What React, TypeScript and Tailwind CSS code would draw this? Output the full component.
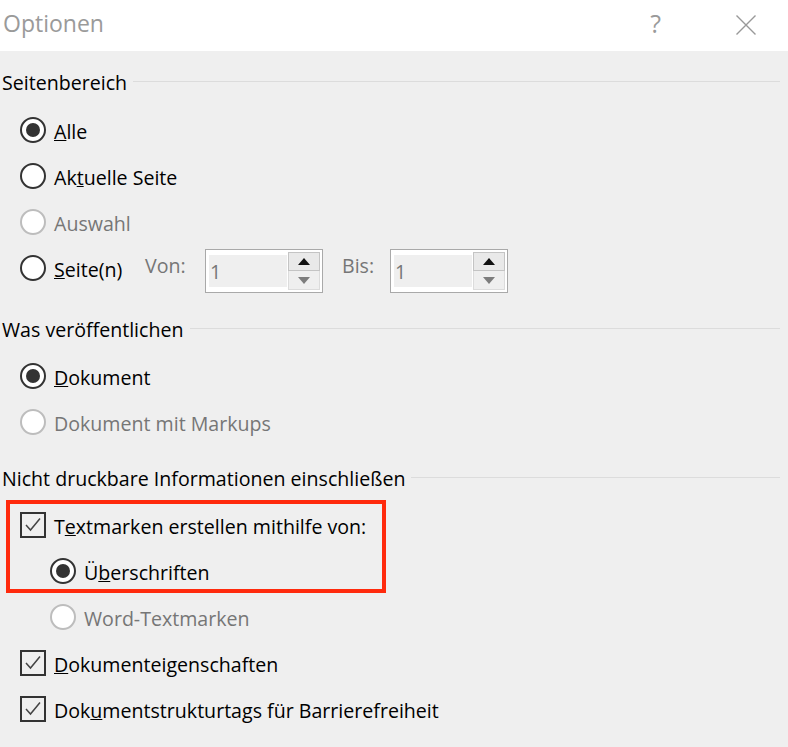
import { ReactNode } from "react";

function Heading({ children, className }: { children: ReactNode; className: string }) {
  return (
    <div className={`flex h-[30px] items-center pl-[2px] pr-[8px] ${className}`}>
      <span className="mt-[2px] text-black">{children}</span>
      <div className="ml-[6px] mt-[-1px] h-[1px] flex-1 bg-[#dcdcdc]" />
    </div>
  );
}

function Radio({ checked, disabled }: { checked?: boolean; disabled?: boolean }) {
  return (
    <span
      className={`mb-[4px] flex h-[26px] w-[26px] shrink-0 items-center justify-center rounded-full border-[2px] bg-white ${
        disabled ? "border-[#bdbdbd]" : "border-[#333333]"
      }`}
    >
      {checked && <span className="h-[14px] w-[14px] rounded-full bg-[#333333]" />}
    </span>
  );
}

function Check() {
  return (
    <span className="mb-[4px] flex h-[26px] w-[26px] shrink-0 items-center justify-center border-[2px] border-[#333333] bg-[#efefef]">
      <svg width="20" height="20" viewBox="0 0 20 20" fill="none">
        <path d="M3 10 L7.5 15 L17 3.5" stroke="#444444" strokeWidth="1.5" />
      </svg>
    </span>
  );
}

function Row({ box, children, disabled, indent }: { box: ReactNode; children: ReactNode; disabled?: boolean; indent?: boolean }) {
  return (
    <div className={`flex h-[46px] items-center gap-[8px] ${indent ? "pl-[50px]" : "pl-[20px]"}`}>
      {box}
      <span className={`mt-[-1px] ${disabled ? "text-[#767676]" : "text-black"}`}>{children}</span>
    </div>
  );
}

function Spinner() {
  return (
    <div className="relative flex h-[44px] w-[118px] items-center border border-[#a9a9a9] bg-white p-[2px]">
      <div className="ml-[1px] flex h-[32px] w-[78px] items-center bg-[#efefef] pl-[1px] pt-[2px] text-[#767676]">1</div>
      <div className="absolute right-[2px] top-[2px] flex h-[38px] w-[32px] flex-col">
        <div className="flex h-[19px] items-center justify-center border border-[#c4c4c4] bg-[#e9e9e9]">
          <svg width="12" height="7" viewBox="0 0 12 7">
            <path d="M6 0 L12 7 L0 7 Z" fill="#111111" />
          </svg>
        </div>
        <div className="flex h-[19px] items-center justify-center border border-t-0 border-[#dcdcdc] bg-[#efefef]">
          <svg width="12" height="7" viewBox="0 0 12 7">
            <path d="M0 0 L12 0 L6 7 Z" fill="#7d7d7d" />
          </svg>
        </div>
      </div>
    </div>
  );
}

export default function App() {
  return (
    <div className="h-[747px] w-[788px] overflow-hidden bg-[#efefef] font-['Open_Sans','Noto_Sans',sans-serif] text-[19.6px] leading-[26px]">
      <div className="flex h-[51px] items-center bg-white pl-[3px]">
        <span className="flex-1 pb-[5px] text-[23px] text-[#9a9a9a]">Optionen</span>
        <span className="mr-[75px] pb-[6px] text-[25px] text-[#9a9a9a]">?</span>
        <svg className="mb-[2px] mr-[32px]" width="20" height="20" viewBox="0 0 20 20" fill="none">
          <path d="M0.5 0.5 L19.5 19.5 M19.5 0.5 L0.5 19.5" stroke="#999999" strokeWidth="1.4" />
        </svg>
      </div>

      <Heading className="mt-[16px]">Seitenbereich</Heading>
      <div className="mt-[12px]">
        <Row box={<Radio checked />}><u>A</u>lle</Row>
        <Row box={<Radio />}>Ak<u>t</u>uelle Seite</Row>
        <Row box={<Radio disabled />} disabled>Auswahl</Row>
        <div className="flex h-[46px] items-center pl-[20px]">
          <Radio />
          <span className="ml-[8px] mt-[-1px] w-[91px] text-black"><u>S</u>eite(n)</span>
          <span className="mb-[8px] w-[60px] text-[#767676]">Von:</span>
          <div className="mt-[2px]"><Spinner /></div>
          <span className="mb-[8px] ml-[19px] w-[48px] text-[#767676]">Bis:</span>
          <div className="mt-[2px]"><Spinner /></div>
        </div>
      </div>

      <Heading className="mt-[21px]">Was veröffentlichen</Heading>
      <div className="mt-[11px]">
        <Row box={<Radio checked />}><u>D</u>okument</Row>
        <Row box={<Radio disabled />} disabled>Dokument mit Markups</Row>
      </div>

      <Heading className="mt-[16px]">Nicht druckbare Informationen einschließen</Heading>
      <div className="relative mt-[11px]">
        <Row box={<Check />}>T<u>e</u>xtmarken erstellen mithilfe von:</Row>
        <Row box={<Radio checked />} indent>Ü<u>b</u>erschriften</Row>
        <div className="absolute left-[6px] top-[-4px] h-[93px] w-[380px] border-[4px] border-[#ff2a0d]" />
      </div>
      <Row box={<Radio disabled />} disabled indent>Word-Textmarken</Row>
      <Row box={<Check />}><u>D</u>okumenteigenschaften</Row>
      <Row box={<Check />}>Dok<u>u</u>mentstrukturtags für Barrierefreiheit</Row>
    </div>
  );
}
